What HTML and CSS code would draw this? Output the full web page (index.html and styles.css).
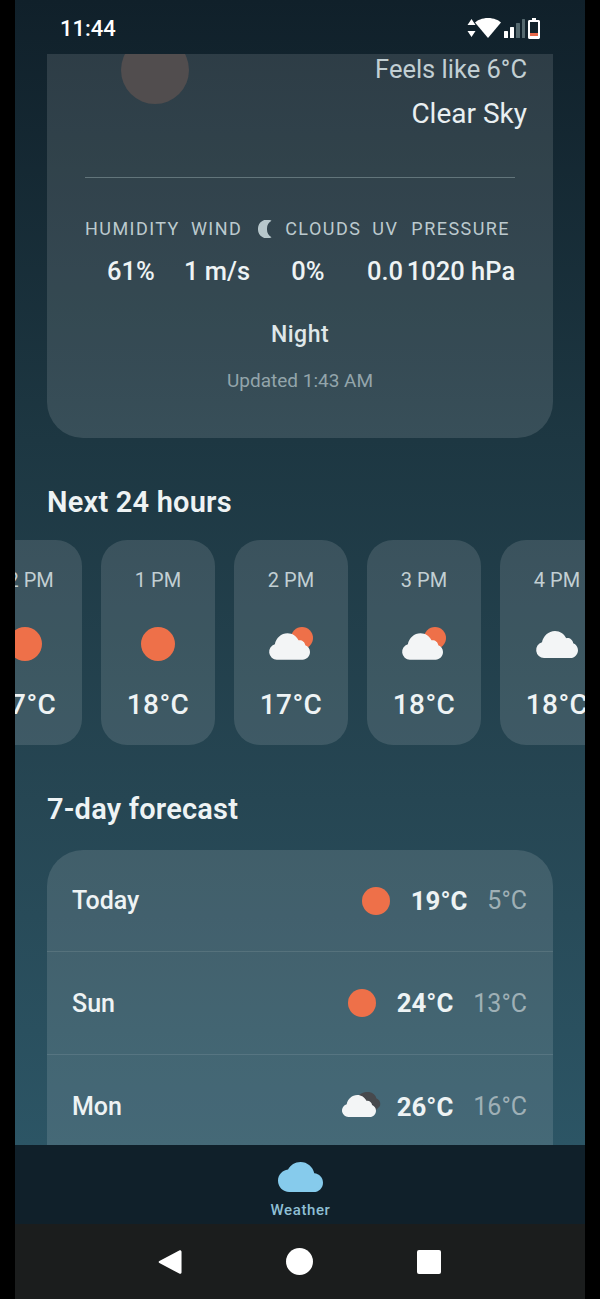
FILE: index.html
```html
<!DOCTYPE html>
<html lang="en">
<head>
  <meta charset="UTF-8">
  <title>Weather</title>
  <link rel="stylesheet" href="styles.css">
</head>
<body>
  <svg class="defs" width="0" height="0">
    <symbol id="cloud" viewBox="0 0 43 27">
      <path d="M9 27a8 8 0 0 1-2-15.7C8.200 5 13.500 0 20 0c5 0 9.200 2.900 11.200 7.200 3.400-.6 6.500 1.600 7 5C41 13.300 43 15.900 43 19.200 43 23.500 39.500 27 35.500 27z"/>
    </symbol>
  </svg>

  <div class="phone">
    <div class="status">
      <span class="clock">11:44</span>
      <svg class="status-icons" width="74" height="24" viewBox="0 0 74 24">
        <path class="white" d="M4.500 2 8.500 8H.5zM4.500 20 .5 14h8z"/>
        <path class="white" d="M21 1c6 0 10.500 2.200 13 4.500L21 21 8 5.500C10.500 3.200 15 1 21 1z"/>
        <rect class="white" x="37" y="14" width="4" height="7" rx=".5"/>
        <rect class="white" x="43" y="10" width="4" height="11" rx=".5"/>
        <rect class="dim" x="49" y="6" width="4" height="15" rx=".5"/>
        <rect class="dim" x="55" y="2" width="3" height="19" rx=".5"/>
        <path class="white" d="M65 1h4v2h2.500c.8 0 1.500.7 1.500 1.500v16c0 .8-.7 1.500-1.500 1.500h-9c-.8 0-1.500-.7-1.500-1.500v-16c0-.8.7-1.500 1.500-1.500H65z"/>
        <rect class="hollow" x="63" y="5" width="8" height="11"/>
        <rect class="low" x="63" y="16" width="8" height="3"/>
      </svg>
    </div>

    <main class="content">
      <section class="hero">
        <div class="hero-top">
          <div class="hero-sun"></div>
          <div class="hero-text">
            <div class="feels">Feels like 6°C</div>
            <div class="sky">Clear Sky</div>
          </div>
        </div>
        <div class="labels">
          <span>HUMIDITY</span>
          <span>WIND</span>
          <svg class="moon" width="15" height="18" viewBox="0 0 15 18"><path d="M13.500.8A9 9 0 0 0 9 9a9 9 0 0 0 4.500 8.200A9 9 0 0 1 0 9 9 9 0 0 1 13.500.8z"/></svg>
          <span>CLOUDS</span>
          <span>UV</span>
          <span class="label-pressure">PRESSURE</span>
        </div>
        <div class="values">
          <span>61%</span>
          <span>1 m/s</span>
          <span>0%</span>
          <span>0.0</span>
          <span>1020 hPa</span>
        </div>
        <div class="daypart">Night</div>
        <div class="updated">Updated 1:43 AM</div>
      </section>

      <h2 class="heading">Next 24 hours</h2>
      <div class="hours">
        <div class="hour">
          <span class="hour-time">12 PM</span>
          <div class="hour-icon"><div class="sun"></div></div>
          <span class="hour-temp">17°C</span>
        </div>
        <div class="hour">
          <span class="hour-time">1 PM</span>
          <div class="hour-icon"><div class="sun"></div></div>
          <span class="hour-temp">18°C</span>
        </div>
        <div class="hour">
          <span class="hour-time">2 PM</span>
          <div class="hour-icon">
            <svg class="partly" width="46" height="34" viewBox="0 0 46 34">
              <circle class="sun-fill" cx="34" cy="11" r="11"/>
              <use href="#cloud" class="cloud-white" x="0" y="6" width="42" height="27"/>
            </svg>
          </div>
          <span class="hour-temp">17°C</span>
        </div>
        <div class="hour">
          <span class="hour-time">3 PM</span>
          <div class="hour-icon">
            <svg class="partly" width="46" height="34" viewBox="0 0 46 34">
              <circle class="sun-fill" cx="34" cy="11" r="11"/>
              <use href="#cloud" class="cloud-white" x="0" y="6" width="42" height="27"/>
            </svg>
          </div>
          <span class="hour-temp">18°C</span>
        </div>
        <div class="hour">
          <span class="hour-time">4 PM</span>
          <div class="hour-icon">
            <svg class="overcast" width="43" height="27"><use href="#cloud" class="cloud-white"/></svg>
          </div>
          <span class="hour-temp">18°C</span>
        </div>
      </div>

      <h2 class="heading heading-week">7-day forecast</h2>
      <section class="week">
        <div class="day">
          <span class="day-name">Today</span>
          <div class="sun sun-day"></div>
          <span class="day-high">19°C</span>
          <span class="day-low">5°C</span>
        </div>
        <div class="day">
          <span class="day-name">Sun</span>
          <div class="sun sun-day"></div>
          <span class="day-high">24°C</span>
          <span class="day-low">13°C</span>
        </div>
        <div class="day">
          <span class="day-name">Mon</span>
          <svg class="day-cloud" width="40" height="27" viewBox="0 0 40 27">
            <path class="cloud-dark" d="M18 3c3-2.500 6-3 10-3 4 .5 6.500 3 7.500 6.500C38.500 8 40 10.500 39 14l-5 5-16-8z"/>
            <use href="#cloud" class="cloud-white" x="0" y="3" width="35" height="22"/>
          </svg>
          <span class="day-high">26°C</span>
          <span class="day-low">16°C</span>
        </div>
      </section>
    </main>

    <nav class="tabbar">
      <svg width="45" height="30" viewBox="0 4 24 16"><path class="tab-cloud" d="M19.350 10.040C18.670 6.590 15.640 4 12 4 9.110 4 6.600 5.640 5.350 8.040 2.340 8.360 0 10.910 0 14c0 3.310 2.690 6 6 6h13c2.760 0 5-2.240 5-5 0-2.640-2.050-4.780-4.650-4.960z"/></svg>
      <span class="tab-label">Weather</span>
    </nav>

    <div class="sysnav">
      <svg width="24" height="28" viewBox="0 0 26 28"><path class="white" d="M23 1.500c1.200-.7 2.500.2 2.500 1.500v22c0 1.300-1.300 2.200-2.500 1.500L1.500 15.200c-1.100-.6-1.100-1.800 0-2.400z"/></svg>
      <div class="sys-home"></div>
      <div class="sys-recent"></div>
    </div>
  </div>
</body>
</html>
```

FILE: styles.css
```css
* {
  box-sizing: border-box;
}
html, body {
  margin: 0;
  height: 100%;
  background: #000;
  overflow: hidden;
}
body {
  font-family: Roboto, "Noto Sans", sans-serif;
}
.defs {
  position: absolute;
}
.phone {
  width: 570px;
  height: 1299px;
  margin: 0 auto;
  display: flex;
  flex-direction: column;
  overflow: hidden;
  background: linear-gradient(#10202a 0, #1d3742 440px, #264653 800px, #2c5565 1145px);
}
.status {
  height: 54px;
  flex: none;
  padding: 0 44px 0 45px;
  display: flex;
  align-items: center;
  justify-content: space-between;
}
.clock {
  color: #fff;
  font-size: 22px;
  font-weight: 500;
  margin-top: 3px;
}
.status-icons {
  margin-top: 3px;
}
.white {
  fill: #fff;
}
.dim {
  fill: #55696f;
}
.hollow {
  fill: #12232b;
}
.low {
  fill: #e8694a;
}

/* scrolled content */
.content {
  flex: 1;
  min-height: 0;
  overflow: hidden;
  padding: 0 32px;
}
.hero {
  height: 384px;
  background: rgba(255, 255, 255, 0.12);
  border-radius: 0 0 36px 36px;
  overflow: hidden;
  padding: 0 26px 0 38px;
}
.hero-top {
  display: flex;
  justify-content: space-between;
  height: 124px;
  border-bottom: 1px solid #62757b;
  margin-right: 12px;
}
.hero-sun {
  width: 68px;
  height: 68px;
  margin: -18px 0 0 36px;
  border-radius: 50%;
  background: #514d4e;
}
.hero-text {
  text-align: right;
  margin-right: -12px;
}
.feels {
  font-size: 25.500px;
  line-height: 30px;
  color: #c2cfd3;
}
.sky {
  font-size: 28px;
  line-height: 36px;
  margin-top: 12px;
  color: #e9eff1;
}
.labels {
  margin-top: 40px;
  display: flex;
  align-items: center;
  gap: 11px;
  font-size: 18px;
  line-height: 22px;
  letter-spacing: 1.450px;
  color: #bccace;
  white-space: nowrap;
}
.moon {
  fill: #b7c7cb;
  margin: 0 1px 0 5px;
}
.label-pressure {
  margin-left: 2px;
}
.values {
  margin-top: 16px;
  display: grid;
  grid-template-columns: 92px 80px 102px 52px 100px;
  justify-items: center;
  font-size: 25.500px;
  line-height: 30px;
  font-weight: 500;
  color: #eef3f4;
  white-space: nowrap;
}
.daypart {
  margin: 34px 0 0 -12px;
  text-align: center;
  font-size: 23px;
  line-height: 30px;
  font-weight: 500;
  letter-spacing: .5px;
  color: #dfe7e9;
}
.updated {
  margin: 20px 0 0 -12px;
  text-align: center;
  font-size: 19px;
  line-height: 22px;
  color: #93a5ab;
}
.heading {
  margin: 47px 0 0;
  font-size: 29px;
  line-height: 34px;
  font-weight: 600;
  letter-spacing: .2px;
  color: #eef3f4;
}
.heading-week {
  margin-top: 47px;
}

/* hourly strip */
.hours {
  display: flex;
  gap: 19px;
  margin: 21px 0 0 -79px;
  width: 800px;
}
.hour {
  width: 114px;
  height: 205px;
  flex: none;
  border-radius: 26px;
  background: rgba(255, 255, 255, 0.12);
  display: flex;
  flex-direction: column;
  align-items: center;
  color: #eef3f4;
}
.hour-time {
  margin-top: 28px;
  font-size: 20px;
  line-height: 24px;
  color: #c2cfd3;
}
.hour-icon {
  height: 34px;
  margin-top: 35px;
  display: flex;
  align-items: center;
  justify-content: center;
}
.hour-temp {
  margin-top: 27px;
  font-size: 28px;
  line-height: 34px;
  font-weight: 500;
  letter-spacing: .4px;
}
.sun {
  width: 34px;
  height: 34px;
  flex: none;
  border-radius: 50%;
  background: #ee7049;
}
.sun-fill {
  fill: #ee7049;
}
.cloud-white {
  fill: #f3f5f6;
}
.cloud-dark {
  fill: #47494d;
}
.overcast {
  margin-left: -1px;
}

/* 7 day list */
.week {
  margin-top: 24px;
  height: 330px;
  border-radius: 36px 36px 0 0;
  background: rgba(255, 255, 255, 0.12);
  padding: 0 26px 0 25px;
}
.day {
  height: 103px;
  display: flex;
  align-items: center;
  border-bottom: 1px solid rgba(255, 255, 255, 0.1);
  margin: 0 -26px 0 -25px;
  padding: 0 26px 0 25px;
}
.day:first-child {
  height: 102px;
}
.day:last-child {
  border-bottom: 0;
}
.day-name {
  flex: 1;
  font-size: 25px;
  font-weight: 500;
  color: #eef3f4;
}
.sun-day {
  width: 28px;
  height: 28px;
}
.day-cloud {
  margin: -2px -5px 0 0;
}
.day-high {
  margin-left: 21px;
  font-size: 25.800px;
  font-weight: 700;
  color: #eef3f4;
}
.day-low {
  margin-left: 20px;
  font-size: 25px;
  color: #9fb0b6;
}

.tabbar {
  height: 79px;
  flex: none;
  background: #10202a;
  display: flex;
  flex-direction: column;
  align-items: center;
  padding-top: 17px;
}
.tab-cloud {
  fill: #86cbec;
}
.tab-label {
  margin: 9px 0 0 1px;
  font-size: 15px;
  line-height: 19px;
  font-weight: 500;
  letter-spacing: .6px;
  color: #8fbfd4;
}
.sysnav {
  height: 75px;
  flex: none;
  background: #1b1d1d;
  display: flex;
  align-items: center;
  justify-content: space-between;
  padding: 0 144px 0 143px;
}
.sys-home {
  width: 27px;
  height: 27px;
  border-radius: 50%;
  background: #fff;
}
.sys-recent {
  width: 24px;
  height: 24px;
  border-radius: 2px;
  background: #fff;
}
```
